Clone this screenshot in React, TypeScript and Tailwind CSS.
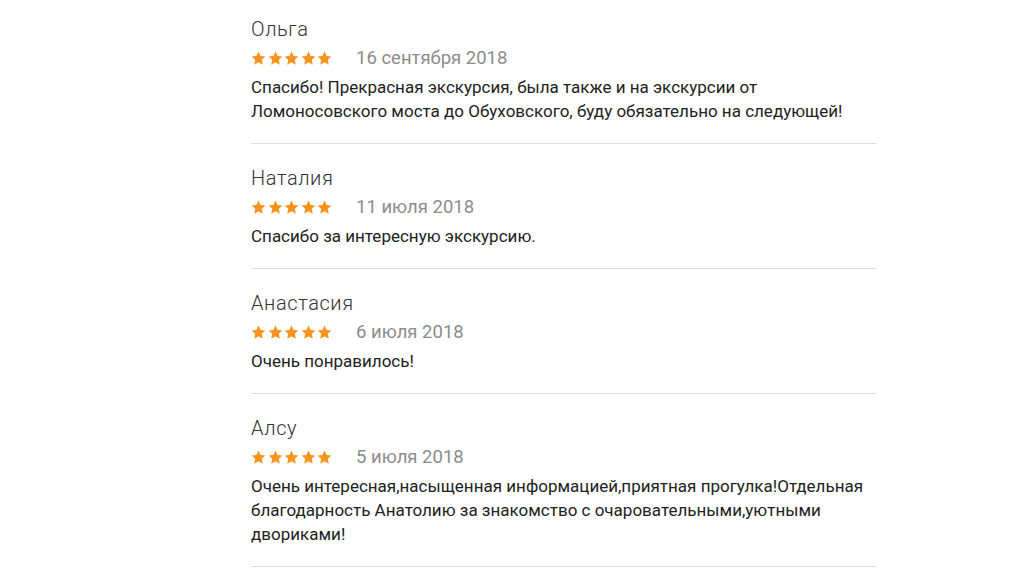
import React from 'react';

interface Review {
  name: string;
  date: string;
  text: string;
}

const reviews: Review[] = [
  {
    name: 'Ольга',
    date: '16 сентября 2018',
    text: 'Спасибо! Прекрасная экскурсия, была также и на экскурсии от Ломоносовского моста до Обуховского, буду обязательно на следующей!',
  },
  { name: 'Наталия', date: '11 июля 2018', text: 'Спасибо за интересную экскурсию.' },
  { name: 'Анастасия', date: '6 июля 2018', text: 'Очень понравилось!' },
  {
    name: 'Алсу',
    date: '5 июля 2018',
    text: 'Очень интересная,насыщенная информацией,приятная прогулка!Отдельная благодарность Анатолию за знакомство с очаровательными,уютными двориками!',
  },
];

function Star() {
  return (
    <svg width="15" height="14" viewBox="0 0 24 23" className="shrink-0">
      <path
        d="M12 0.8l3.4 7.3 7.9 0.9-5.9 5.5 1.6 7.9L12 18.4l-7 4 1.6-7.9L0.7 9l7.9-0.9z"
        fill="#f7931e"
      />
    </svg>
  );
}

function Stars() {
  return (
    <div className="flex items-center gap-[1.5px] w-[80px]">
      <Star />
      <Star />
      <Star />
      <Star />
      <Star />
    </div>
  );
}

export default function App() {
  return (
    <div className="min-h-screen bg-white font-['Roboto',sans-serif]">
      <div className="ml-[251px] w-[625px]">
        {reviews.map((r, i) => (
          <div
            key={r.name}
            className={`border-b border-[#dcdcdc] pb-[20px] ${i === 0 ? 'pt-[17px]' : 'pt-[22px]'}`}
          >
            <div className="text-[20px] font-light tracking-[0.6px] leading-[24px] text-[#333333]">{r.name}</div>
            <div className="mt-[5px] flex items-center h-[24px]">
              <Stars />
              <span className="ml-[25px] text-[18.5px] leading-[24px] text-[#8c8c8c]">{r.date}</span>
            </div>
            <p className="mt-[5px] text-[17px] leading-[24px] text-[#222222]">{r.text}</p>
          </div>
        ))}
      </div>
    </div>
  );
}
